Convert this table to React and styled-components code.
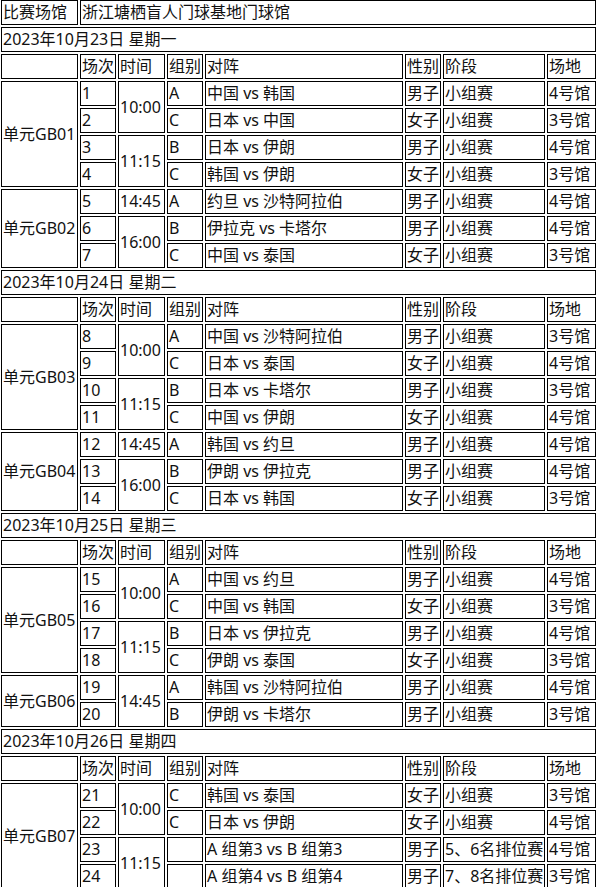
import React from "react";
import styled, { createGlobalStyle } from "styled-components";

// Page defaults: no body margin, a sans font that carries both Latin and CJK
const GlobalStyle = createGlobalStyle`
  body {
    margin: 0;
    background: #fff;
    color: #000;
    font-family: "Noto Sans", "Noto Sans CJK SC", sans-serif;
    font-size: 16px;
  }
`;

// The whole schedule is one old-style bordered table
const Table = styled.table`
  table-layout: fixed;
  width: 599px;
  margin: -2px 0 0 -1px;
  border-collapse: separate;
  border-spacing: 2px;
  border: 0;
`;

const Cell = styled.td`
  border: 1px solid #000;
  height: 23px;
  padding: 0 1px;
  line-height: 23px;
  font-size: 16px;
  text-align: left;
  vertical-align: middle;
  white-space: nowrap;
  overflow: hidden;
  color: #111;
`;

// column widths, borders included
const widths = [77, 36, 47, 36, 198, 36, 102, 49];

const days = [
  {
    date: "2023年10月23日 星期一",
    units: [
      {
        name: "单元GB01",
        matches: [
          { no: 1, time: "10:00", span: 2, group: "A", vs: "中国 vs 韩国", sex: "男子", stage: "小组赛", hall: "4号馆" },
          { no: 2, group: "C", vs: "日本 vs 中国", sex: "女子", stage: "小组赛", hall: "3号馆" },
          { no: 3, time: "11:15", span: 2, group: "B", vs: "日本 vs 伊朗", sex: "男子", stage: "小组赛", hall: "4号馆" },
          { no: 4, group: "C", vs: "韩国 vs 伊朗", sex: "女子", stage: "小组赛", hall: "3号馆" },
        ],
      },
      {
        name: "单元GB02",
        matches: [
          { no: 5, time: "14:45", span: 1, group: "A", vs: "约旦 vs 沙特阿拉伯", sex: "男子", stage: "小组赛", hall: "4号馆" },
          { no: 6, time: "16:00", span: 2, group: "B", vs: "伊拉克 vs 卡塔尔", sex: "男子", stage: "小组赛", hall: "4号馆" },
          { no: 7, group: "C", vs: "中国 vs 泰国", sex: "女子", stage: "小组赛", hall: "3号馆" },
        ],
      },
    ],
  },
  {
    date: "2023年10月24日 星期二",
    units: [
      {
        name: "单元GB03",
        matches: [
          { no: 8, time: "10:00", span: 2, group: "A", vs: "中国 vs 沙特阿拉伯", sex: "男子", stage: "小组赛", hall: "3号馆" },
          { no: 9, group: "C", vs: "日本 vs 泰国", sex: "女子", stage: "小组赛", hall: "4号馆" },
          { no: 10, time: "11:15", span: 2, group: "B", vs: "日本 vs 卡塔尔", sex: "男子", stage: "小组赛", hall: "3号馆" },
          { no: 11, group: "C", vs: "中国 vs 伊朗", sex: "女子", stage: "小组赛", hall: "4号馆" },
        ],
      },
      {
        name: "单元GB04",
        matches: [
          { no: 12, time: "14:45", span: 1, group: "A", vs: "韩国 vs 约旦", sex: "男子", stage: "小组赛", hall: "4号馆" },
          { no: 13, time: "16:00", span: 2, group: "B", vs: "伊朗 vs 伊拉克", sex: "男子", stage: "小组赛", hall: "4号馆" },
          { no: 14, group: "C", vs: "日本 vs 韩国", sex: "女子", stage: "小组赛", hall: "3号馆" },
        ],
      },
    ],
  },
  {
    date: "2023年10月25日 星期三",
    units: [
      {
        name: "单元GB05",
        matches: [
          { no: 15, time: "10:00", span: 2, group: "A", vs: "中国 vs 约旦", sex: "男子", stage: "小组赛", hall: "4号馆" },
          { no: 16, group: "C", vs: "中国 vs 韩国", sex: "女子", stage: "小组赛", hall: "3号馆" },
          { no: 17, time: "11:15", span: 2, group: "B", vs: "日本 vs 伊拉克", sex: "男子", stage: "小组赛", hall: "4号馆" },
          { no: 18, group: "C", vs: "伊朗 vs 泰国", sex: "女子", stage: "小组赛", hall: "3号馆" },
        ],
      },
      {
        name: "单元GB06",
        matches: [
          { no: 19, time: "14:45", span: 2, group: "A", vs: "韩国 vs 沙特阿拉伯", sex: "男子", stage: "小组赛", hall: "4号馆" },
          { no: 20, group: "B", vs: "伊朗 vs 卡塔尔", sex: "男子", stage: "小组赛", hall: "3号馆" },
        ],
      },
    ],
  },
  {
    date: "2023年10月26日 星期四",
    units: [
      {
        name: "单元GB07",
        matches: [
          { no: 21, time: "10:00", span: 2, group: "C", vs: "韩国 vs 泰国", sex: "女子", stage: "小组赛", hall: "3号馆" },
          { no: 22, group: "C", vs: "日本 vs 伊朗", sex: "女子", stage: "小组赛", hall: "4号馆" },
          { no: 23, time: "11:15", span: 2, group: "", vs: "A 组第3 vs B 组第3", sex: "男子", stage: "5、6名排位赛", hall: "4号馆" },
          { no: 24, group: "", vs: "A 组第4 vs B 组第4", sex: "男子", stage: "7、8名排位赛", hall: "3号馆" },
        ],
      },
    ],
  },
];

const headers = ["", "场次", "时间", "组别", "对阵", "性别", "阶段", "场地"];

function MatchRow({ unit, match, first }) {
  return (
    <tr>
      {first ? <Cell rowSpan={unit.matches.length}>{unit.name}</Cell> : null}
      <Cell>{match.no}</Cell>
      {match.time ? <Cell rowSpan={match.span}>{match.time}</Cell> : null}
      <Cell>{match.group}</Cell>
      <Cell>{match.vs}</Cell>
      <Cell>{match.sex}</Cell>
      <Cell>{match.stage}</Cell>
      <Cell>{match.hall}</Cell>
    </tr>
  );
}

export default function App() {
  return (
    <>
      <GlobalStyle />
      <Table>
        <colgroup>
          {widths.map((w, i) => (
            <col key={i} style={{ width: w }} />
          ))}
        </colgroup>
        <tbody>
          <tr>
            <Cell>比赛场馆</Cell>
            <Cell colSpan={7}>浙江塘栖盲人门球基地门球馆</Cell>
          </tr>
          {days.map((day) => (
            <React.Fragment key={day.date}>
              <tr>
                <Cell colSpan={8}>{day.date}</Cell>
              </tr>
              <tr>
                {headers.map((h, i) => (
                  <Cell key={i}>{h}</Cell>
                ))}
              </tr>
              {day.units.map((unit) =>
                unit.matches.map((m, i) => (
                  <MatchRow key={m.no} unit={unit} match={m} first={i === 0} />
                ))
              )}
            </React.Fragment>
          ))}
        </tbody>
      </Table>
    </>
  );
}
